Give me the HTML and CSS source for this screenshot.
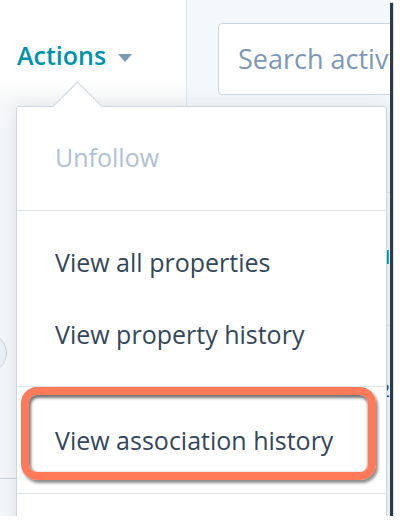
FILE: index.html
```html
<!DOCTYPE html>
<html lang="en">
<head>
<meta charset="utf-8">
<title>Actions menu</title>
<link rel="stylesheet" href="styles.css">
</head>
<body>
<div class="frame">
  <div class="page">
    <div class="left">
      <div class="left-header">
        <div class="actions">Actions <span class="caret"></span></div>
      </div>
      <div class="left-body">
        <div class="avatar"></div>
        <div class="left-rule"></div>
      </div>
    </div>
    <div class="right">
      <div class="search">Search activities</div>
      <div class="feed">
        <div class="feed-row"><span class="link">Expand all</span></div>
        <div class="feed-row dark"><span class="meta">at 10:42</span></div>
      </div>
    </div>
  </div>

  <div class="popover">
    <div class="arrow"></div>
    <div class="section first">
      <div class="item disabled">Unfollow</div>
    </div>
    <div class="section second">
      <div class="item">View all properties</div>
      <div class="item">View property history</div>
    </div>
    <div class="section marked">
      <div class="item">View association history</div>
      <div class="mark"></div>
    </div>
    <div class="section empty"></div>
  </div>
</div>
</body>
</html>
```

FILE: styles.css
```css
* { box-sizing: border-box; }
html, body { margin: 0; background: #fff; }
body { font-family: "Open Sans", "Noto Sans", sans-serif; }

.frame {
  position: relative;
  width: 390px;
  height: 516px;
  overflow: hidden;
  background: #fff;
  box-shadow: 3px 3px 1px #2c3b4c;
}

.page {
  display: grid;
  grid-template-columns: 187px 1fr;
  height: 100%;
}

.left {
  display: flex;
  flex-direction: column;
  border-right: 1px solid #dfe3eb;
  background: #fff;
}
.left-header {
  height: 106px;
  padding: 41px 0 0 17px;
  background: linear-gradient(to bottom, #fff 70%, #f6f7f8 100%);
}
.actions {
  display: flex;
  align-items: center;
  gap: 12px;
  color: #0091ae;
  font-weight: 600;
  font-size: 25px;
  line-height: 28px;
}
.caret {
  width: 0;
  height: 0;
  margin-top: 6px;
  border-left: 7.5px solid transparent;
  border-right: 7.5px solid transparent;
  border-top: 8px solid #7c98b6;
}
.left-body {
  flex: 1;
  padding-top: 227px;
  background: #f6f8fa;
}
.avatar {
  width: 40px;
  height: 40px;
  margin-left: -33px;
  border-radius: 50%;
  border: 1px solid #cbd6e2;
  background: #eaf0f6;
}
.left-rule {
  margin-top: 105px;
  border-top: 1px solid #cbd6e2;
}

.right {
  background: #f5f8fa;
  padding: 23px 0 0 31px;
  overflow: hidden;
}
.search {
  width: 230px;
  height: 72px;
  display: flex;
  align-items: center;
  padding: 0 0 2px 19px;
  border: 1px solid #cbd6e2;
  border-radius: 4px;
  background: #fff;
  font-size: 27px;
  color: #7c98b6;
  white-space: nowrap;
  overflow: hidden;
}
.feed {
  margin: 97px 0 0 -31px;
}
.feed-row {
  height: 133px;
  border-top: 1px solid #dfe3eb;
  display: flex;
  justify-content: flex-end;
  padding-top: 52px;
  font-size: 18px;
  line-height: 24px;
}
.link { color: #0091ae; font-weight: 600; }
.meta { color: #33475b; }

.popover {
  position: absolute;
  left: 16px;
  top: 106px;
  width: 371px;
  height: 430px;
  background: #fff;
  border: 1px solid #cbd6e2;
  border-radius: 3px;
  box-shadow: 0 2px 20px rgba(30, 45, 60, 0.12);
}
.arrow {
  position: absolute;
  left: 33px;
  top: -27px;
  width: 54px;
  height: 27px;
  overflow: hidden;
}
.arrow::before {
  content: "";
  position: absolute;
  left: 8.5px;
  top: 9px;
  width: 35px;
  height: 35px;
  background: #fff;
  border: 1px solid #cbd6e2;
  transform: rotate(45deg);
}

.section {
  border-top: 1px solid #dfe3eb;
}
.section.first { border-top: 0; padding: 14px 0 17px; }
.section.second { padding: 15px 0 16px; }
.section.marked { position: relative; padding: 17px 0; }
.section.empty { height: 40px; }

.item {
  height: 72px;
  display: flex;
  align-items: center;
  padding-left: 38px;
  font-size: 25px;
  color: #33475b;
  white-space: nowrap;
}
.item.disabled { color: #b0c1d4; }

.mark {
  position: absolute;
  left: 4px;
  top: 0;
  width: 355px;
  height: 93px;
  border: 8px solid #ff7a59;
  border-radius: 16px;
  box-shadow: inset 1px 2px 3px 1px rgba(0, 0, 0, 0.55), 2px 3px 3px rgba(0, 0, 0, 0.45);
}
```
